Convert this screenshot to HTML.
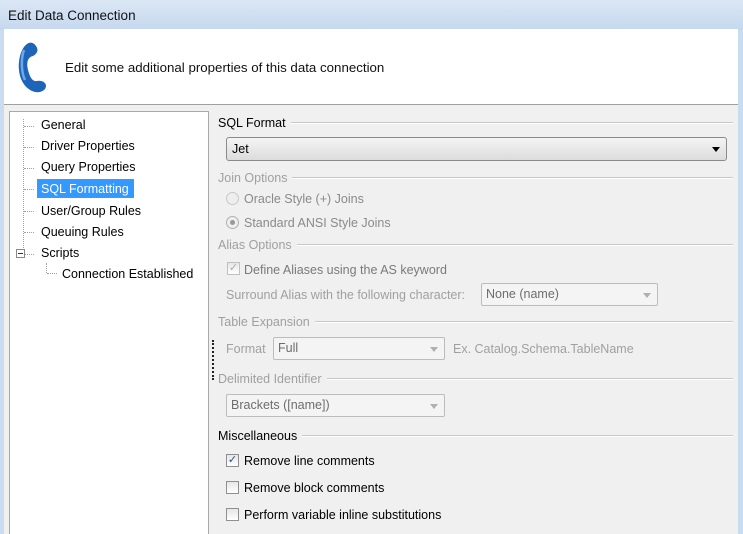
<!DOCTYPE html>
<html><head><style>
*{margin:0;padding:0;box-sizing:border-box}
body{width:743px;height:534px;overflow:hidden;background:#c9dcf0;font-family:"Liberation Sans",sans-serif;font-size:12.5px;color:#000;position:relative}
.a{position:absolute;white-space:nowrap}
.g{color:#a0a0a0}
.lg{position:absolute;left:218px;width:515px;height:14px}
.lg:before{content:"";position:absolute;left:0;right:0;top:6px;height:1px;background:#c8c8c8;border-bottom:1px solid #fff}
.lg span{position:relative;background:#f0f0f0;padding-right:5px}
.cb{position:absolute;width:13px;height:13px;border:1px solid #8f8f8f;background:linear-gradient(#e6e6e6,#fff)}
.dd{position:absolute;height:23px;border:1px solid #bcbcbc;border-radius:2px;background:#f4f4f4;padding:3px 4px;color:#6d6d6d}
.dd:after{content:"";position:absolute;right:6px;top:9px;border:4px solid transparent;border-top:5px solid #b0b0b0;border-bottom:0}
.tr{position:absolute;left:41px}
</style></head><body>
<div class="a" style="left:0;top:0;width:743px;height:30px;background:linear-gradient(#dbe7f5,#c5d8ee)"></div>
<div class="a" style="left:8px;top:8px;font-size:13.5px;color:#111">Edit Data Connection</div>
<div class="a" style="left:4px;top:29px;width:734px;height:76px;background:#fff;border-bottom:1px solid #a0a0a0"></div>
<svg class="a" style="left:15px;top:40px" width="34" height="56" viewBox="0 0 34 56">
<path d="M12 4 C6 8 3 20 4 30 C5 42 12 50 20 52 C26 53 31 50 31 46 C31 42 26 40 22 41 C18 42 15 38 13 30 C11 22 13 17 18 16 C22 14 24 10 21 6 C18 2 15 2 12 4Z" fill="#1e64b8"/>
<path d="M9 10 C6 18 6 32 10 40" stroke="#6fa8e8" stroke-width="2.5" fill="none"/>
</svg>
<div class="a" style="left:65px;top:60px;color:#111;font-size:13.3px">Edit some additional properties of this data connection</div>
<div class="a" style="left:4px;top:105px;width:734px;height:429px;background:#f0f0f0"></div>
<div class="a" style="left:9px;top:111px;width:200px;height:423px;background:#fff;border:1px solid #a9a9a9;border-bottom:0"></div>
<div class="a" style="left:23px;top:119px;height:135px;border-left:1px dotted #a0a0a0"></div>
<div class="a" style="left:46px;top:263px;height:10px;border-left:1px dotted #a0a0a0"></div>
<div class="a" style="left:24px;top:126px;width:10px;border-top:1px dotted #a0a0a0"></div>
<div class="a" style="left:24px;top:147px;width:10px;border-top:1px dotted #a0a0a0"></div>
<div class="a" style="left:24px;top:168px;width:10px;border-top:1px dotted #a0a0a0"></div>
<div class="a" style="left:24px;top:189px;width:10px;border-top:1px dotted #a0a0a0"></div>
<div class="a" style="left:24px;top:211px;width:10px;border-top:1px dotted #a0a0a0"></div>
<div class="a" style="left:24px;top:232px;width:10px;border-top:1px dotted #a0a0a0"></div>
<div class="a" style="left:24px;top:254px;width:10px;border-top:1px dotted #a0a0a0"></div>
<div class="a" style="left:47px;top:273px;width:10px;border-top:1px dotted #a0a0a0"></div>
<div class="a" style="left:16px;top:249px;width:9px;height:9px;border:1px solid #888;background:#fff"><div style="position:absolute;left:1px;top:3px;width:5px;height:1px;background:#333"></div></div>
<div class="tr a" style="top:118px">General</div>
<div class="tr a" style="top:139px">Driver Properties</div>
<div class="tr a" style="top:160px">Query Properties</div>
<div class="a" style="left:37px;top:179px;width:97px;height:19px;background:#3399ff;border:1px dotted #c08040"></div>
<div class="tr a" style="top:182px;color:#fff">SQL Formatting</div>
<div class="tr a" style="top:204px">User/Group Rules</div>
<div class="tr a" style="top:225px">Queuing Rules</div>
<div class="tr a" style="top:246px">Scripts</div>
<div class="a" style="left:62px;top:267px">Connection Established</div>

<div class="lg" style="top:116px"><span>SQL Format</span></div>
<div class="a" style="left:226px;top:137px;width:501px;height:24px;border:1px solid #8a8a8a;border-radius:3px;background:linear-gradient(#f4f4f4,#dcdcdc);padding:4px 5px">Jet</div>
<div class="a" style="left:712px;top:147px;border:4px solid transparent;border-top:5px solid #000;border-bottom:0"></div>

<div class="lg g" style="top:171px"><span>Join Options</span></div>
<div class="a" style="left:226px;top:192px;width:13px;height:13px;border-radius:50%;border:1px solid #c8c8c8;background:#eee"></div>
<div class="a" style="left:244px;top:192px;color:#8a8a8a">Oracle Style (+) Joins</div>
<div class="a" style="left:226px;top:216px;width:13px;height:13px;border-radius:50%;border:1px solid #b0b0b0;background:#eee"><div style="position:absolute;left:3px;top:3px;width:5px;height:5px;border-radius:50%;background:#999"></div></div>
<div class="a" style="left:244px;top:216px;color:#8a8a8a">Standard ANSI Style Joins</div>

<div class="lg g" style="top:238px"><span>Alias Options</span></div>
<div class="cb" style="left:227px;top:262px;border-color:#c0c0c0;color:#aaa;font-size:11px;line-height:11px;text-align:center">✓</div>
<div class="a" style="left:244px;top:263px;color:#7a7a7a">Define Aliases using the AS keyword</div>
<div class="a g" style="left:226px;top:288px">Surround Alias with the following character:</div>
<div class="dd" style="left:481px;top:283px;width:177px">None (name)</div>

<div class="lg g" style="top:315px"><span>Table Expansion</span></div>
<div class="a g" style="left:226px;top:342px">Format</div>
<div class="dd" style="left:273px;top:337px;width:172px">Full</div>
<div class="a g" style="left:453px;top:342px">Ex. Catalog.Schema.TableName</div>
<div class="a" style="left:212px;top:340px;height:40px;border-left:2px dotted #222"></div>
<div class="lg g" style="top:372px"><span>Delimited Identifier</span></div>
<div class="dd" style="left:226px;top:394px;width:219px">Brackets ([name])</div>

<div class="lg" style="top:429px"><span>Miscellaneous</span></div>
<div class="cb" style="left:226px;top:454px;color:#2a4a9a;font-size:11px;line-height:11px;text-align:center">✓</div>
<div class="a" style="left:244px;top:454px">Remove line comments</div>
<div class="cb" style="left:226px;top:481px"></div>
<div class="a" style="left:244px;top:481px">Remove block comments</div>
<div class="cb" style="left:226px;top:508px"></div>
<div class="a" style="left:244px;top:508px">Perform variable inline substitutions</div>
</body></html>
